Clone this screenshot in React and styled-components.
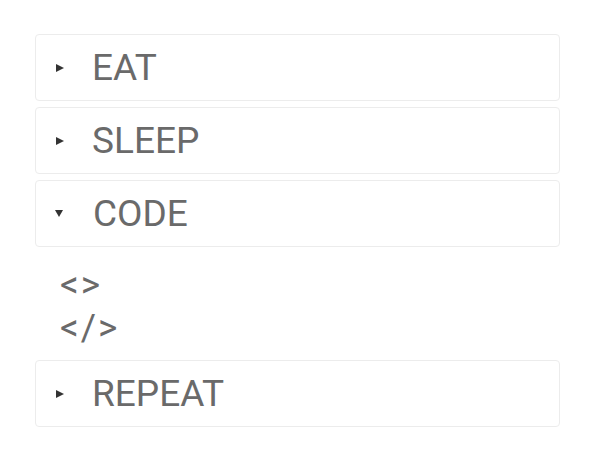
import React, { useState } from 'react'
import styled, { createGlobalStyle } from 'styled-components'

const GlobalStyle = createGlobalStyle`
  body {
    margin: 0;
    background: #ffffff;
    font-family: Roboto, 'Liberation Sans', sans-serif;
  }
`

const StyledList = styled.div`
  display: flex;
  flex-direction: column;
  gap: 6px;
  padding: 34px 40px 0 35px;
`

const Header = styled.div`
  display: flex;
  align-items: center;
  height: 45px;
  padding: 10px 0 10px 20px;
  border: 1px solid #ececec;
  border-radius: 4px;
  cursor: pointer;
  color: #6a6a6a;
  font-size: 37px;
  line-height: 45px;
`

const Marker = styled.span`
  width: 0;
  height: 0;
  margin-right: 28px;
  border-style: solid;
  ${(p) =>
    p.open
      ? `
    border-width: 7px 4px 0 4px;
    border-color: #333 transparent transparent transparent;
    margin-left: -1px;
    margin-right: 30px;
  `
      : `
    border-width: 4px 0 4px 8px;
    border-color: transparent transparent transparent #333;
  `}
`

const Content = styled.div`
  padding: 16px 0 5px 25px;
  color: #6a6a6a;
  font-size: 37px;
  line-height: 43px;
  letter-spacing: 2px;
`

const items = [
  { title: 'EAT', body: null },
  { title: 'SLEEP', body: null },
  { title: 'CODE', body: ['<>', '</>'] },
  { title: 'REPEAT', body: null },
]

export default function App() {
  const [open, setOpen] = useState('CODE')
  return (
    <>
      <GlobalStyle />
      <StyledList>
        {items.map((item) => (
          <div key={item.title}>
            <Header onClick={() => setOpen(open === item.title ? null : item.title)}>
              <Marker open={open === item.title} />
              {item.title}
            </Header>
            {open === item.title && item.body && (
              <Content>
                {item.body.map((line) => (
                  <div key={line}>{line}</div>
                ))}
              </Content>
            )}
          </div>
        ))}
      </StyledList>
    </>
  )
}
